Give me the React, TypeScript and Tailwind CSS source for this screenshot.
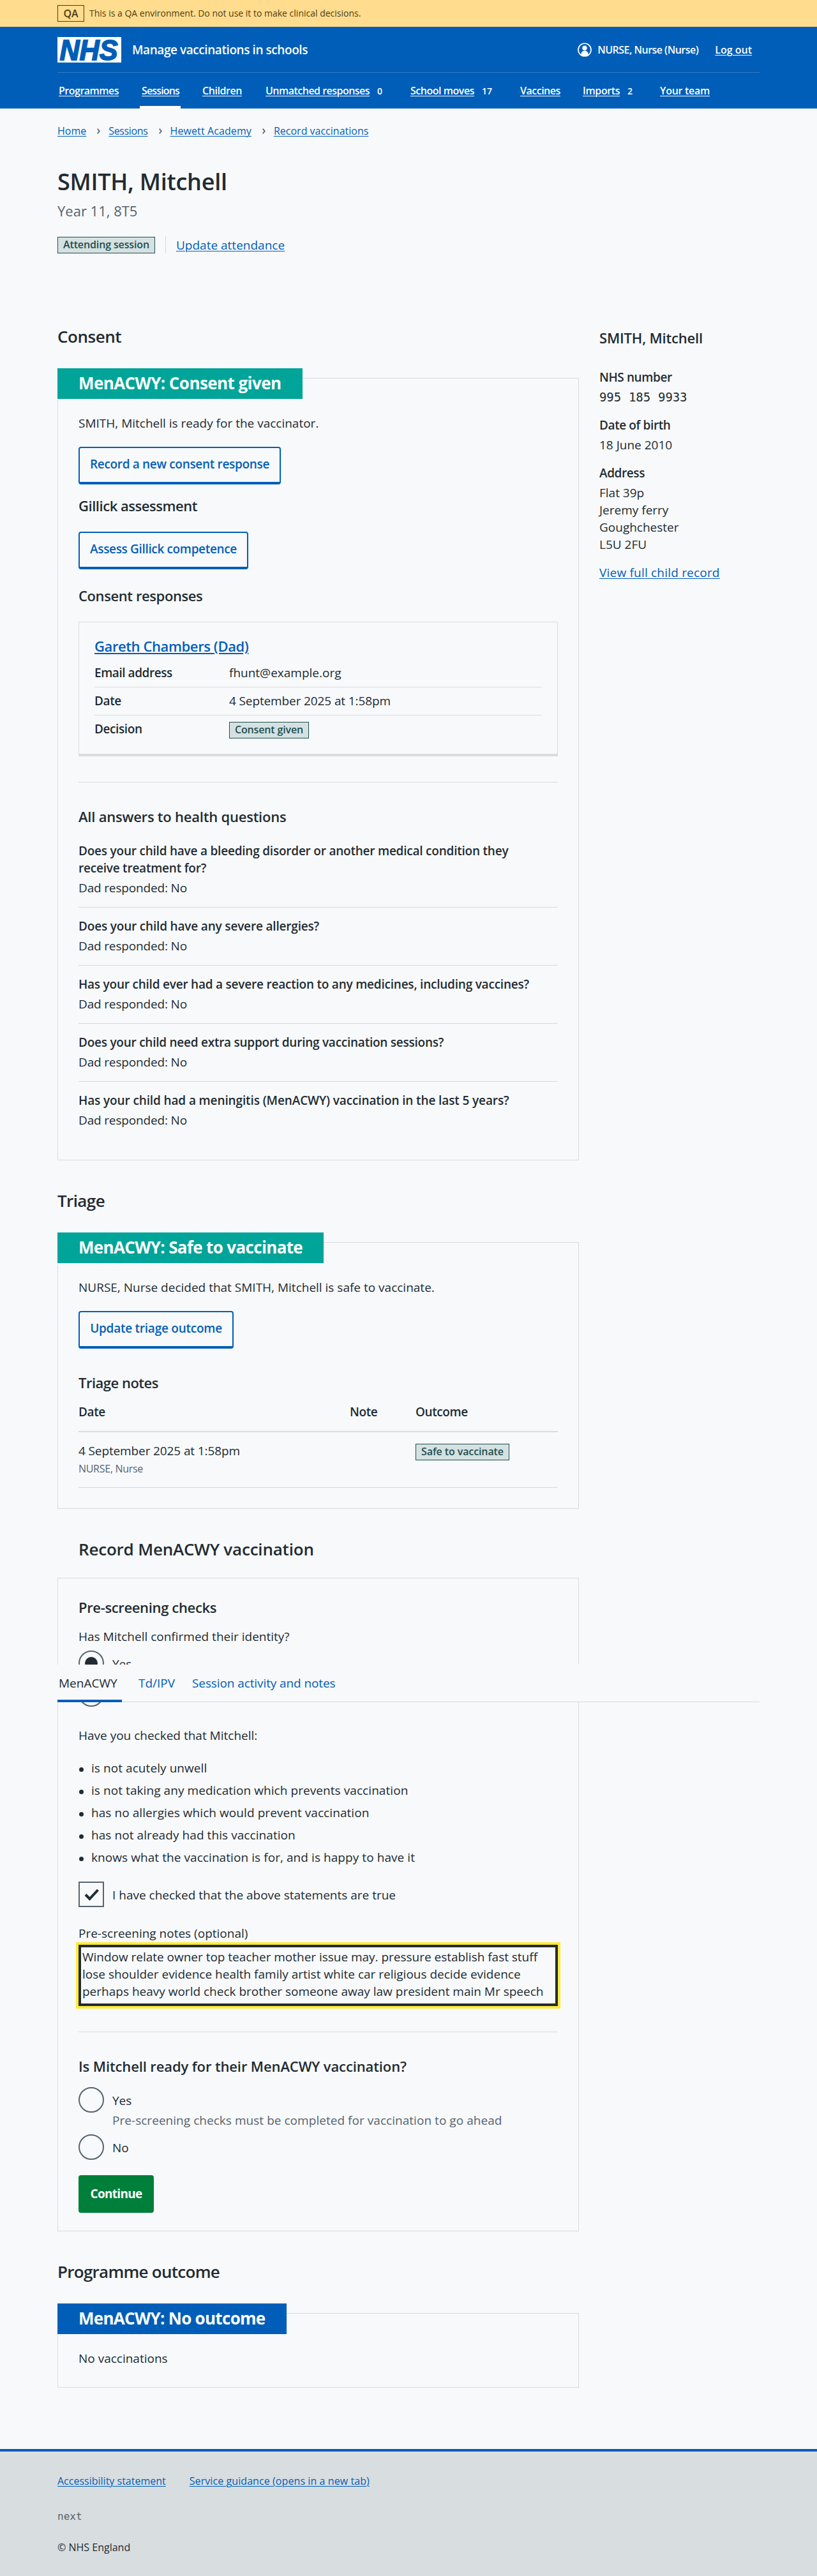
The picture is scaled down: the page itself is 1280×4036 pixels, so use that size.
import type { ReactNode } from "react";

function Tag({ children, className = "tracking-[-0.15px]" }: { children: ReactNode; className?: string }) {
  return (
    <strong
      className={`inline-block h-[26px] whitespace-nowrap border border-[#1d4f50] bg-[#d5e0e0] px-2 text-[16px] font-semibold leading-[22px] text-[#1d4f50] ${className}`}
    >
      {children}
    </strong>
  );
}

function SecondaryButton({ children, className }: { children: ReactNode; className: string }) {
  return (
    <button
      className={`block h-[59px] whitespace-nowrap rounded border-2 border-b-4 border-[#005eb8] pb-1 text-center text-[19px] font-semibold leading-[28px] text-[#005eb8] ${className}`}
    >
      {children}
    </button>
  );
}

function SectionHeading({ children, className }: { children: ReactNode; className: string }) {
  return <h2 className={`text-[26px] font-semibold leading-[34px] ${className}`}>{children}</h2>;
}

function StatusCard({
  title,
  titleClass,
  className,
  children,
}: {
  title: string;
  titleClass: string;
  className: string;
  children: ReactNode;
}) {
  return (
    <section className={`mt-12 border border-[#d8dbde] px-8 ${className}`}>
      <h3
        className={`-ml-[33px] -mt-4 h-12 w-fit whitespace-nowrap px-[33px] text-[26px] font-bold leading-[46px] text-white ${titleClass}`}
      >
        {title}
      </h3>
      {children}
    </section>
  );
}

function Radio({ label, checked = false }: { label: string; checked?: boolean }) {
  return (
    <label className="flex h-10 gap-[13px]">
      <span className="flex size-10 items-center justify-center rounded-full border-2 border-[#55646f]">
        {checked && <span className="size-5 rounded-full bg-[#212b32]" />}
      </span>
      <span className="pt-[7px]">{label}</span>
    </label>
  );
}

const navItems = [
  { label: "Programmes", count: "", cls: "ml-0.5 w-[130px] tracking-[-0.5px]" },
  { label: "Sessions", count: "", cls: "w-[95px] tracking-[-0.85px]" },
  { label: "Children", count: "", cls: "w-[99px] tracking-[-0.45px]" },
  { label: "Unmatched responses", count: "0", cls: "w-[227px] tracking-[-0.52px]" },
  { label: "School moves", count: "17", cls: "w-[172px] tracking-[-0.47px]" },
  { label: "Vaccines", count: "", cls: "w-[98px] tracking-[-0.5px]" },
  { label: "Imports", count: "2", cls: "w-[121px] tracking-[-0.4px]" },
  { label: "Your team", count: "", cls: "tracking-[-0.28px]" },
];

const questions = [
  { text: "Does your child have a bleeding disorder or another medical condition they receive treatment for?", cls: "pr-12 tracking-[-0.22px]" },
  { text: "Does your child have any severe allergies?", cls: "tracking-[-0.18px]" },
  { text: "Has your child ever had a severe reaction to any medicines, including vaccines?", cls: "tracking-[-0.22px]" },
  { text: "Does your child need extra support during vaccination sessions?", cls: "tracking-[-0.25px]" },
  { text: "Has your child had a meningitis (MenACWY) vaccination in the last 5 years?", cls: "tracking-[-0.12px]" },
];

const statements = [
  "is not acutely unwell",
  "is not taking any medication which prevents vaccination",
  "has no allergies which would prevent vaccination",
  "has not already had this vaccination",
  "knows what the vaccination is for, and is happy to have it",
];

const link = "text-[#005eb8] underline decoration-1 underline-offset-2";

function Chevron() {
  return (
    <svg width="5" height="9" viewBox="0 0 5 9" className="mt-2 ml-[17px] mr-[13px]" fill="none" stroke="#55646f" strokeWidth="1.8">
      <path d="M.7.7 3.8 4.5.7 8.3" />
    </svg>
  );
}

function Header() {
  return (
    <header>
      <div className="flex h-[42px] items-center bg-[#ffdc8e] pl-[90px] text-[14px] text-[#4d3d12]">
        <strong className="flex h-[26px] w-[42px] items-center justify-center border border-[#4d3d12] text-[16px] font-semibold">QA</strong>
        <span className="ml-2">This is a QA environment. Do not use it to make clinical decisions.</span>
      </div>
      <div className="h-32 bg-[#005eb8] px-[90px] text-white">
        <div className="flex h-[71px] items-center">
          <svg width="100" height="40" viewBox="0 0 100 40" className="overflow-visible">
            <rect width="100" height="40" fill="#fff" />
            <text
              x="3.5"
              y="36"
              textLength="91"
              lengthAdjust="spacingAndGlyphs"
              fontFamily="Liberation Sans"
              fontWeight="700"
              fontStyle="italic"
              fontSize="45"
              fill="#005eb8"
              stroke="#005eb8"
              strokeWidth="1.8"
            >
              NHS
            </text>
          </svg>
          <span className="ml-[17px] text-[19px] font-semibold tracking-[-0.43px]">Manage vaccinations in schools</span>
          <svg className="ml-auto" width="22" height="22" viewBox="0 0 22 22">
            <circle cx="11" cy="11" r="10" fill="none" stroke="#fff" strokeWidth="1.7" />
            <circle cx="11" cy="8.3" r="3.7" fill="#fff" />
            <path d="M5.500 19.200v-1.700c0-2.800 2.300-5 5.500-5s5.500 2.200 5.500 5v1.700c-1.500 1-3.400 1.700-5.500 1.700s-4-.7-5.500-1.700Z" fill="#fff" />
          </svg>
          <span className="ml-[9px] w-[158px] whitespace-nowrap text-[16px] font-semibold tracking-[-0.52px]">NURSE, Nurse (Nurse)</span>
          <a className="ml-[26px] mr-3 text-[16px] font-semibold underline decoration-1 underline-offset-2">Log out</a>
        </div>
        <nav className="flex h-[57px] border-t border-[#3379c3] text-[16px] font-semibold leading-[56px]">
          {navItems.map((n) => (
            <div key={n.label} className={`relative shrink-0 whitespace-nowrap ${n.cls}`}>
              <a className="underline decoration-1 underline-offset-2">{n.label}</a>
              {n.count && <span className="ml-3 text-[14px] tracking-normal">{n.count}</span>}
              {n.label === "Sessions" && <span className="absolute bottom-0 -left-[3px] h-1 w-16 bg-white" />}
            </div>
          ))}
        </nav>
      </div>
    </header>
  );
}

function ConsentSection() {
  return (
    <>
      <SectionHeading className="tracking-[-0.47px]">Consent</SectionHeading>
      <StatusCard title="MenACWY: Consent given" titleClass="bg-[#00a499] tracking-[-0.57px]" className="pb-12">
        <p className="mt-6">SMITH, Mitchell is ready for the vaccinator.</p>
        <SecondaryButton className="mt-[23px] w-[317px] tracking-[-0.32px]">Record a new consent response</SecondaryButton>
        <h4 className="mt-[18px] text-[22px] font-semibold leading-[30px] tracking-[-0.46px]">Gillick assessment</h4>
        <SecondaryButton className="mt-[26px] w-[266px] tracking-[-0.35px]">Assess Gillick competence</SecondaryButton>
        <h4 className="mt-[26px] text-[22px] font-semibold leading-[30px] tracking-[-0.4px]">Consent responses</h4>
        <div className="mt-[26px] h-[211px] border border-b-4 border-[#d8dde0] px-6 pt-[22px]">
          <h5 className="text-[22px] font-semibold leading-[30px] tracking-[-0.4px]">
            <a className="text-[#005eb8] underline decoration-2 underline-offset-2">Gareth Chambers (Dad)</a>
          </h5>
          <dl className="mt-1.5">
            <div className="flex h-11 border-b border-[#d8dde0] pt-[7px]">
              <dt className="w-[211px] font-semibold tracking-[-0.45px]">Email address</dt>
              <dd>fhunt@example.org</dd>
            </div>
            <div className="flex h-11 border-b border-[#d8dde0] pt-[7px]">
              <dt className="w-[211px] font-semibold tracking-[-0.4px]">Date</dt>
              <dd className="tracking-[-0.12px]">4 September 2025 at 1:58pm</dd>
            </div>
            <div className="flex pt-[7px]">
              <dt className="w-[211px] font-semibold tracking-[-0.4px]">Decision</dt>
              <dd className="flex pt-[3px]"><Tag>Consent given</Tag></dd>
            </div>
          </dl>
        </div>
        <hr className="mt-10 border-[#d8dbde]" />
        <h4 className="mb-[10px] mt-[38px] text-[22px] font-semibold leading-[30px] tracking-[-0.22px]">All answers to health questions</h4>
        {questions.map((q) => (
          <div key={q.text} className="border-b border-[#d8dbde] pb-4 pt-4 last:border-0 last:pb-0">
            <p className={`font-semibold leading-[27px] ${q.cls}`}>{q.text}</p>
            <p className="mt-[3px] tracking-[-0.16px]">Dad responded: No</p>
          </div>
        ))}
      </StatusCard>
    </>
  );
}

function TriageSection() {
  const cols = "grid grid-cols-[425px_103px_1fr]";
  return (
    <>
      <SectionHeading className="mt-[46px] tracking-[-0.6px]">Triage</SectionHeading>
      <StatusCard title="MenACWY: Safe to vaccinate" titleClass="bg-[#00a499] tracking-[-0.65px]" className="pb-8">
        <p className="mt-6">NURSE, Nurse decided that SMITH, Mitchell is safe to vaccinate.</p>
        <SecondaryButton className="mt-[23px] w-[243px] tracking-[-0.25px]">Update triage outcome</SecondaryButton>
        <h4 className="mt-[38px] text-[22px] font-semibold leading-[30px] tracking-[-0.5px]">Triage notes</h4>
        <div className={`${cols} mt-[17px] border-b-2 border-[#d8dde0] pb-4 font-semibold tracking-[-0.4px]`}>
          <span>Date</span>
          <span>Note</span>
          <span>Outcome</span>
        </div>
        <div className={`${cols} border-b border-[#d8dbde] pb-[17px] pt-[15px]`}>
          <div>
            <p className="tracking-[-0.12px]">4 September 2025 at 1:58pm</p>
            <p className="mt-0.5 text-[16px] leading-6 tracking-[-0.3px] text-[#55646f]">NURSE, Nurse</p>
          </div>
          <span />
          <div className="flex items-start pt-[3px]"><Tag className="tracking-[-0.1px]">Safe to vaccinate</Tag></div>
        </div>
      </StatusCard>
    </>
  );
}

function ProgrammeTabs() {
  return (
    <div className="absolute -left-px top-[135px] flex h-[59px] w-[1100px] border-b border-[#d8dbde] bg-[#f8f9fb] pt-[15px]">
      <span className="-mb-px w-[101px] border-b-4 border-[#005eb8] pl-0.5">MenACWY</span>
      <a className="ml-[26px] w-[84px] text-[#005eb8]">Td/IPV</a>
      <a className="tracking-[-0.1px] text-[#005eb8]">Session activity and notes</a>
    </div>
  );
}

function RecordSection() {
  return (
    <>
      <h2 className="ml-[33px] mt-[46px] text-[26px] font-semibold leading-[34px] tracking-[-0.2px]">Record MenACWY vaccination</h2>
      <section className="relative mt-7 border border-[#d8dbde] px-8 pb-7 pt-[30px]">
        <h3 className="text-[22px] font-semibold leading-[30px] tracking-[-0.35px]">Pre-screening checks</h3>
        <p className="mt-[17px]">Has Mitchell confirmed their identity?</p>
        <div className="mt-2 flex flex-col gap-2">
          <Radio label="Yes" checked />
          <Radio label="No" />
        </div>
        <ProgrammeTabs />
        <p className="mt-[31px]">Have you checked that Mitchell:</p>
        <ul className="mt-[23px] flex flex-col gap-[7px]">
          {statements.map((s) => (
            <li key={s} className="flex items-center gap-3 tracking-[0.07px]">
              <span className="ml-px mt-1 size-[7px] rounded-full bg-[#212b32]" />
              {s}
            </li>
          ))}
        </ul>
        <label className="mt-6 flex h-10 gap-[13px]">
          <span className="flex size-10 items-center justify-center border-2 border-[#55646f]">
            <svg width="24" height="19" viewBox="0 0 24 19" className="ml-0.5" fill="none" stroke="#212b32" strokeWidth="4">
              <path d="m2 9.500 6.500 6.500L21.500 2" />
            </svg>
          </span>
          <span className="pt-[7px]">I have checked that the above statements are true</span>
        </label>
        <p className="mt-[27px]">Pre-screening notes (optional)</p>
        <div className="mt-1 h-24 overflow-hidden whitespace-nowrap border-4 border-[#212b32] pl-0.5 pt-0.5 leading-[27px] outline-4 outline-[#ffeb3b]">
          <p className="tracking-[-0.02px]">Window relate owner top teacher mother issue may. pressure establish fast stuff</p>
          <p>lose shoulder evidence health family artist white car religious decide evidence</p>
          <p>perhaps heavy world check brother someone away law president main Mr speech</p>
        </div>
        <hr className="mt-10 border-[#d8dbde]" />
        <h3 className="mt-[38px] text-[22px] font-semibold leading-[30px] tracking-[-0.12px]">Is Mitchell ready for their MenACWY vaccination?</h3>
        <div className="mt-[18px]">
          <Radio label="Yes" />
          <p className="-mt-0.5 mb-2 ml-[53px] tracking-[0.04px] text-[#55646f]">Pre-screening checks must be completed for vaccination to go ahead</p>
          <Radio label="No" />
        </div>
        <button className="mt-6 block h-[59px] w-[118px] rounded bg-[#007f3b] pb-0.5 font-bold tracking-[-0.7px] text-white">Continue</button>
      </section>
    </>
  );
}

function Sidebar() {
  return (
    <aside>
      <h2 className="mt-1 text-[22px] font-semibold leading-[30px] tracking-[-0.18px]">SMITH, Mitchell</h2>
      <h3 className="mt-[33px] font-semibold tracking-[-0.4px]">NHS number</h3>
      <p className="mt-[3px] flex gap-3 font-['DejaVu_Sans_Mono',monospace] tracking-[-0.1px]">
        <span>995</span>
        <span>185</span>
        <span>9933</span>
      </p>
      <h3 className="mt-4 font-semibold tracking-[-0.4px]">Date of birth</h3>
      <p className="mt-[3px]">18 June 2010</p>
      <h3 className="mt-4 font-semibold tracking-[-0.4px]">Address</h3>
      <div className="mt-1 leading-[27px]">
        <p>Flat 39p</p>
        <p>Jeremy ferry</p>
        <p>Goughchester</p>
        <p>L5U 2FU</p>
      </div>
      <p className="mt-4 tracking-[0.2px]"><a className={link}>View full child record</a></p>
    </aside>
  );
}

export default function App() {
  return (
    <div className="min-h-[4036px] bg-[#f8f9fb] font-['Open_Sans',sans-serif] text-[19px] leading-[28px] text-[#212b32]">
      <Header />
      <main className="h-[3667px] px-[90px] pt-[23px]">
        <nav className="flex text-[16px] leading-6">
          <a className={link}>Home</a>
          <Chevron />
          <a className={`${link} tracking-[-0.35px]`}>Sessions</a>
          <Chevron />
          <a className={`${link} tracking-[0.1px]`}>Hewett Academy</a>
          <Chevron />
          <a className={link}>Record vaccinations</a>
        </nav>
        <h1 className="mt-[46px] text-[36px] font-semibold leading-[44px] tracking-[-0.25px]">SMITH, Mitchell</h1>
        <p className="mt-2 text-[22px] leading-[30px] text-[#55646f]">Year 11, 8T5</p>
        <div className="mt-[25px] flex h-[27px] items-center">
          <Tag className="tracking-[-0.13px]">Attending session</Tag>
          <span className="ml-4 h-[27px] w-px bg-[#d8dbde]" />
          <a className={`${link} ml-4`}>Update attendance</a>
        </div>
        <div className="mt-[113px] grid grid-cols-[817px_251px] gap-x-8">
          <div>
            <ConsentSection />
            <TriageSection />
            <RecordSection />
            <SectionHeading className="mt-[46px] tracking-[-0.73px]">Programme outcome</SectionHeading>
            <StatusCard title="MenACWY: No outcome" titleClass="bg-[#005eb8] tracking-[-0.7px]" className="pb-[31px]">
              <p className="mt-6">No vaccinations</p>
            </StatusCard>
          </div>
          <Sidebar />
        </div>
      </main>
      <footer className="h-[199px] border-t-4 border-[#005eb8] bg-[#d8dde0] px-[90px] pt-[34px] text-[16px] leading-6">
        <div className="flex gap-[37px]">
          <a className={link}>Accessibility statement</a>
          <a className={`${link} tracking-[0.08px]`}>Service guidance (opens in a new tab)</a>
        </div>
        <p className="mt-8 font-['DejaVu_Sans_Mono',monospace] text-[#55646f]">next</p>
        <p className="mt-6">© NHS England</p>
      </footer>
    </div>
  );
}
